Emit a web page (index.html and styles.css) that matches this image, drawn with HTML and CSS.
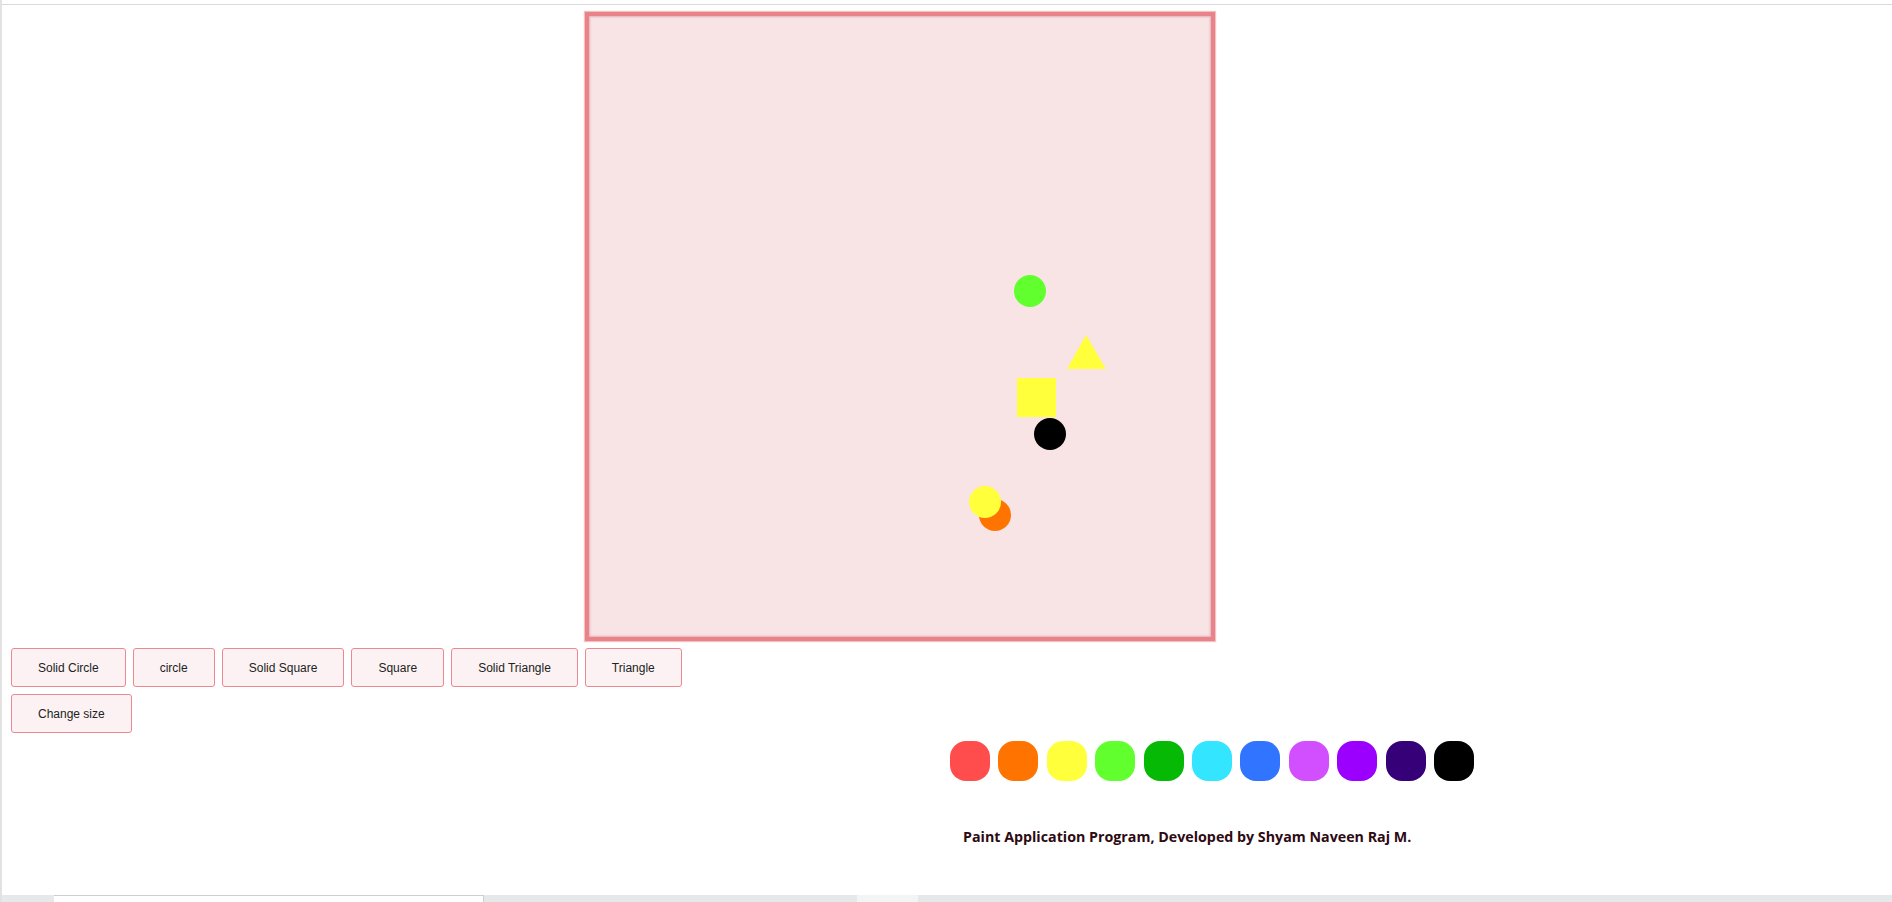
FILE: index.html
```html
<!DOCTYPE html>
<html lang="en">
<head>
<meta charset="utf-8">
<title>Paint Application</title>
<link rel="stylesheet" href="styles.css">
</head>
<body>
<div class="page">
  <div class="topline"></div>
  <main class="app">
    <div class="board-row">
      <div class="board">
        <svg class="drawing" width="622" height="622" viewBox="589 16 622 622" xmlns="http://www.w3.org/2000/svg">
          <circle cx="1030" cy="291" r="16" fill="#62ff2f"/>
          <polygon points="1086,335 1106,369 1067,369" fill="#ffff3b"/>
          <rect x="1017" y="378" width="39" height="39" fill="#ffff3b"/>
          <circle cx="1050" cy="434" r="16" fill="#000"/>
          <circle cx="995" cy="515" r="16" fill="#ff7400"/>
          <circle cx="985" cy="502" r="16" fill="#ffff3b"/>
        </svg>
      </div>
    </div>
    <div class="tools">
      <button class="tool">Solid Circle</button>
      <button class="tool">circle</button>
      <button class="tool">Solid Square</button>
      <button class="tool">Square</button>
      <button class="tool">Solid Triangle</button>
      <button class="tool">Triangle</button>
      <button class="tool">Change size</button>
    </div>
    <div class="palette">
      <span class="swatch red"></span>
      <span class="swatch orange"></span>
      <span class="swatch yellow"></span>
      <span class="swatch lime"></span>
      <span class="swatch green"></span>
      <span class="swatch cyan"></span>
      <span class="swatch blue"></span>
      <span class="swatch pink"></span>
      <span class="swatch purple"></span>
      <span class="swatch indigo"></span>
      <span class="swatch black"></span>
    </div>
    <p class="credit">Paint Application Program, Developed by Shyam Naveen Raj M.</p>
  </main>
  <div class="bottombar">
    <div class="bar-field"></div>
    <div class="bar-light"></div>
  </div>
</div>
</body>
</html>
```
FILE: styles.css
```css
html, body {
  margin: 0;
  padding: 0;
  background: #fff;
}

body {
  font-family: "Liberation Sans", Arial, sans-serif;
  width: 1892px;
  height: 902px;
  overflow: hidden;
}

.page {
  box-sizing: border-box;
  height: 902px;
  border-left: 2px solid #e2e2e2;
  display: flex;
  flex-direction: column;
}

.topline {
  margin-top: 4px;
  height: 1px;
  background: #d9d9d9;
}

.app {
  flex: 1;
  display: flex;
  flex-direction: column;
}

.board-row {
  padding-top: 7px;
  padding-left: 583px;
}

.board {
  box-sizing: border-box;
  width: 630px;
  height: 629px;
  border: 4px solid #e8838a;
  background: #f8e3e5;
  box-shadow: 0 0 1px 1px rgba(236, 140, 148, 0.55), inset 0 0 2px 1px rgba(214, 130, 138, 0.5);
}

.drawing {
  display: block;
}

.tools {
  margin-top: 7px;
  padding-left: 9px;
  width: 680px;
  display: flex;
  flex-wrap: wrap;
  gap: 7px 7px;
}

.tool {
  height: 39px;
  padding: 0 26px;
  font-family: "Liberation Sans", Arial, sans-serif;
  font-size: 12px;
  color: #222;
  background: #fcf2f3;
  border: 1px solid #eb8890;
  border-radius: 3px;
}

.palette {
  margin-top: 8px;
  padding-left: 948px;
  display: flex;
  gap: 8.4px;
}

.swatch {
  width: 40px;
  height: 40px;
  border-radius: 16px;
}

.red { background: #ff4d4d; }
.orange { background: #ff7400; }
.yellow { background: #ffff3b; }
.lime { background: #62ff2f; }
.green { background: #05b905; }
.cyan { background: #33e5ff; }
.blue { background: #3074ff; }
.pink { background: #d24fff; }
.purple { background: #9b00ff; }
.indigo { background: #360078; }
.black { background: #000; }

.credit {
  margin: 46px 0 0;
  padding-left: 961px;
  font-family: "Open Sans", "Noto Sans", sans-serif;
  font-weight: 700;
  font-size: 14.25px;
  line-height: 20px;
  color: #2e0a12;
}

.bottombar {
  margin-top: auto;
  height: 7px;
  background: #e6e9ea;
  display: flex;
}

.bar-field {
  margin-left: 52px;
  width: 429px;
  background: #fff;
  border-top: 1px solid #cfcfcf;
  border-right: 1px solid #cfcfcf;
}

.bar-light {
  margin-left: 373px;
  width: 61px;
  background: #f3f4f4;
}
```
